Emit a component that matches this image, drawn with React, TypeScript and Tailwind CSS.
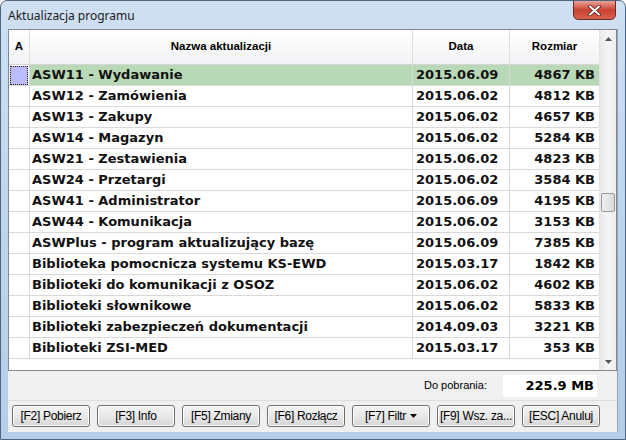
import React from 'react';

/**
 * Aktualizacja programu - okno dialogowe (Windows 7)
 */

type Row = { name: string; date: string; size: string };

const rows: Row[] = [
  { name: 'ASW11 - Wydawanie', date: '2015.06.09', size: '4867 KB' },
  { name: 'ASW12 - Zamówienia', date: '2015.06.02', size: '4812 KB' },
  { name: 'ASW13 - Zakupy', date: '2015.06.02', size: '4657 KB' },
  { name: 'ASW14 - Magazyn', date: '2015.06.02', size: '5284 KB' },
  { name: 'ASW21 - Zestawienia', date: '2015.06.02', size: '4823 KB' },
  { name: 'ASW24 - Przetargi', date: '2015.06.02', size: '3584 KB' },
  { name: 'ASW41 - Administrator', date: '2015.06.09', size: '4195 KB' },
  { name: 'ASW44 - Komunikacja', date: '2015.06.02', size: '3153 KB' },
  { name: 'ASWPlus - program aktualizujący bazę', date: '2015.06.09', size: '7385 KB' },
  { name: 'Biblioteka pomocnicza systemu KS-EWD', date: '2015.03.17', size: '1842 KB' },
  { name: 'Biblioteki do komunikacji z OSOZ', date: '2015.06.02', size: '4602 KB' },
  { name: 'Biblioteki słownikowe', date: '2015.06.02', size: '5833 KB' },
  { name: 'Biblioteki zabezpieczeń dokumentacji', date: '2014.09.03', size: '3221 KB' },
  { name: 'Biblioteki ZSI-MED', date: '2015.03.17', size: '353 KB' },
];

const buttons = ['[F2] Pobierz', '[F3] Info', '[F5] Zmiany', '[F6] Rozłącz', '[F7] Filtr', '[F9] Wsz. za...', '[ESC] Anuluj'];

function Button({ label }: { label: string }) {
  return (
    <div className="w-[78px] h-[22px] rounded-[3px] border border-[#707070] bg-gradient-to-b from-[#f4f4f4] via-[#e9e9e9] to-[#d6d6d6] shadow-[inset_0_0_0_1px_#fcfcfc] flex items-center justify-center gap-[4px] text-[12px] text-black font-['Liberation_Sans',sans-serif] tracking-[-0.3px]">
      <span>{label}</span>
      {label === '[F7] Filtr' && (
        <svg width="7" height="4" viewBox="0 0 7 4">
          <path d="M0 0h7L3.5 4z" fill="#000" />
        </svg>
      )}
    </div>
  );
}

export default function App() {
  return (
    <div className="w-[626px] h-[440px] relative overflow-hidden rounded-t-[7px] border border-[#4e6582] bg-gradient-to-b from-[#cfe0f3] via-[#bfd5ed] to-[#b6cde8] font-['DejaVu_Sans',sans-serif]">
      {/* Title bar */}
      <div className="h-[28px] flex items-center pl-[7px] pt-[2px] text-[12px] text-[#1b1b1b] font-['Noto_Sans',sans-serif]">
        Aktualizacja programu
      </div>

      {/* Close button */}
      <div className="absolute top-[-1px] left-[572px] w-[43px] h-[20px] rounded-b-[5px] border border-[#6d2a23] bg-gradient-to-b from-[#eaa298] via-[#c9402f] to-[#d8614f] flex items-center justify-center">
        <svg width="13" height="11" viewBox="0 0 13 11">
          <path d="M2 1.5l9 8M11 1.5l-9 8" stroke="#5a1a14" strokeWidth="3.6" strokeLinecap="round" />
          <path d="M2 1.5l9 8M11 1.5l-9 8" stroke="#ffffff" strokeWidth="2" strokeLinecap="round" />
        </svg>
      </div>

      {/* Client area */}
      <div className="mx-[7px] h-[403px] bg-[#f0f0f0] border-r border-[#8fa4bf] flex flex-col">
        {/* Grid */}
        <div className="h-[342px] bg-white border border-[#828790] flex">
          <div className="flex-1 flex flex-col">
            {/* Header */}
            <div className="h-[35px] flex border-b border-[#d5d5d5] bg-gradient-to-b from-white to-[#f1f2f4] text-[11.5px] font-bold text-black font-['Liberation_Sans',sans-serif]">
              <div className="w-[21px] border-r border-[#dedede] flex items-center justify-center">A</div>
              <div className="w-[383px] border-r border-[#dedede] flex items-center justify-center">Nazwa aktualizacji</div>
              <div className="w-[97px] border-r border-[#dedede] flex items-center justify-center">Data</div>
              <div className="flex-1 flex items-center justify-center">Rozmiar</div>
            </div>

            {/* Rows */}
            {rows.map((r, i) => (
              <div key={r.name} className="h-[21px] flex border-b border-[#d9d9d9] text-[13px] font-bold text-[#111]">
                <div className="w-[21px] border-r border-[#d9d9d9] flex items-center justify-center">
                  {i === 0 && <div className="w-[18px] h-[19px] bg-[#bcbcfa] border border-dotted border-[#222]" />}
                </div>
                <div className={`w-[383px] border-r border-[#d9d9d9] flex items-center pl-[2px] ${i === 0 ? 'bg-[#b9d8b5]' : ''}`}>
                  {r.name}
                </div>
                <div className={`w-[97px] border-r border-[#d9d9d9] flex items-center pl-[3px] ${i === 0 ? 'bg-[#b9d8b5]' : ''}`}>
                  {r.date}
                </div>
                <div className={`flex-1 flex items-center justify-end pr-[4px] ${i === 0 ? 'bg-[#b9d8b5]' : ''}`}>
                  {r.size}
                </div>
              </div>
            ))}
          </div>

          {/* Scrollbar */}
          <div className="w-[17px] bg-gradient-to-r from-[#e9e9e9] via-[#f5f5f5] to-[#ededed] border-l border-[#e3e3e3] flex flex-col items-center">
            <div className="h-[17px] flex items-center justify-center">
              <svg width="7" height="4" viewBox="0 0 7 4">
                <path d="M0 4L3.5 0L7 4z" fill="#555" />
              </svg>
            </div>
            <div className="flex-1 w-full relative">
              <div className="absolute left-[1px] top-[146px] w-[14px] h-[19px] rounded-[2px] border border-[#979797] bg-gradient-to-r from-[#f0f0f0] via-[#e6e6e6] to-[#d8d8d8]" />
            </div>
            <div className="h-[17px] flex items-center justify-center">
              <svg width="7" height="4" viewBox="0 0 7 4">
                <path d="M0 0L7 0L3.5 4z" fill="#555" />
              </svg>
            </div>
          </div>
        </div>

        {/* Summary */}
        <div className="h-[27px] flex items-center justify-end gap-[16px] pr-[20px] pt-[2px]">
          <span className="text-[11px] text-black font-['Liberation_Sans',sans-serif]">Do pobrania:</span>
          <div className="w-[94px] h-[22px] bg-white flex items-center justify-end pr-[3px] text-[13px] font-bold text-black">
            225.9 MB
          </div>
        </div>

        {/* Separator */}
        <div className="mt-[2px] border-t border-[#d5dfe5] border-b-white" />

        {/* Buttons */}
        <div className="flex-1 flex items-center gap-[7px] pl-[4px] pb-[2px]">
          {buttons.map((b) => (
            <Button key={b} label={b} />
          ))}
        </div>
      </div>
    </div>
  );
}
